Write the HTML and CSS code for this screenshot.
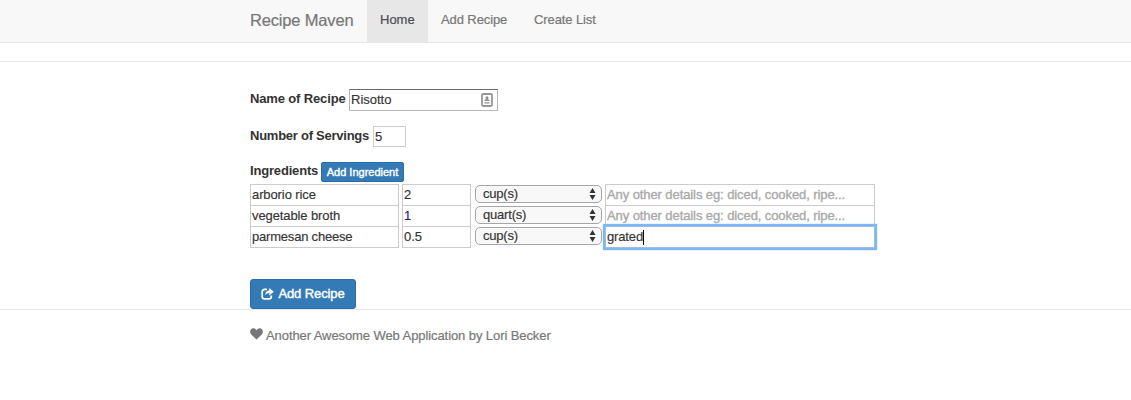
FILE: index.html
```html
<!DOCTYPE html>
<html lang="en">
<head>
<meta charset="utf-8">
<title>Recipe Maven</title>
<link rel="stylesheet" href="styles.css">
</head>
<body>
<nav class="navbar">
  <a class="brand">Recipe Maven</a>
  <a class="nav-link active">Home</a>
  <a class="nav-link nav-add">Add Recipe</a>
  <a class="nav-link">Create List</a>
</nav>
<div class="rule"></div>
<main class="form">
  <div class="field name-field">
    <label class="label name-label">Name of Recipe</label>
    <div class="input name-input"><span>Risotto</span>
      <svg class="card-icon" width="12" height="14" viewBox="0 0 12 14"><rect x="1" y="1" width="10" height="12" rx="1.2" fill="#fff" stroke="#979797" stroke-width="1.8"/><circle cx="6" cy="4.8" r="1.5" fill="#8e8e8e"/><path d="M3.5 8V7.2Q6 5 8.5 7.2V8ZM3.5 9.2h5v1.2h-5z" fill="#8e8e8e"/></svg>
    </div>
  </div>
  <div class="field servings-field">
    <label class="label servings-label">Number of Servings</label>
    <div class="input servings-input">5</div>
  </div>
  <div class="field ingredients-head">
    <label class="label ingredients-label">Ingredients</label>
    <button class="btn btn-small"><span>Add Ingredient</span></button>
  </div>
  <div class="ingredients">
    <div class="row">
      <div class="input cell-name">arborio rice</div>
      <div class="input cell-qty">2</div>
      <div class="select"><span>cup(s)</span><svg width="7" height="12" viewBox="0 0 7 12"><path d="M3.5 0L6.5 5h-6zM3.5 12L.5 7h6z" fill="#333"/></svg></div>
      <div class="input cell-details placeholder">Any other details eg: diced, cooked, ripe...</div>
    </div>
    <div class="row">
      <div class="input cell-name">vegetable broth</div>
      <div class="input cell-qty one">1</div>
      <div class="select"><span>quart(s)</span><svg width="7" height="12" viewBox="0 0 7 12"><path d="M3.5 0L6.5 5h-6zM3.5 12L.5 7h6z" fill="#333"/></svg></div>
      <div class="input cell-details placeholder">Any other details eg: diced, cooked, ripe...</div>
    </div>
    <div class="row">
      <div class="input cell-name cell-tight">parmesan cheese</div>
      <div class="input cell-qty">0.5</div>
      <div class="select"><span>cup(s)</span><svg width="7" height="12" viewBox="0 0 7 12"><path d="M3.5 0L6.5 5h-6zM3.5 12L.5 7h6z" fill="#333"/></svg></div>
      <div class="input cell-details focused"><span>grated</span><i class="caret"></i></div>
    </div>
  </div>
  <button class="btn btn-submit">
    <svg width="13" height="12" viewBox="0 0 13 12"><path d="M6 1.4H3.6Q1.2 1.4 1.2 3.8V8.4Q1.2 10.8 3.6 10.8H8Q10.3 10.8 10.3 8.4V7.6" fill="none" stroke="#fff" stroke-width="1.7"/><path d="M8.3 0L12.8 3.7L8.3 7.4V5.1Q5.6 5 4.2 7.3Q4.4 2.6 8.3 2.3Z" fill="#fff"/></svg>
    <span>Add Recipe</span>
  </button>
</main>
<footer class="footer">
  <svg width="13" height="12" viewBox="0 0 13 12"><path d="M6.5 11.6L1.2 6.4C-.5 4.6 0 1.8 1.7.8C3.5-.2 5.6.4 6.5 2.4C7.4.4 9.5-.2 11.3.8C13 1.8 13.5 4.6 11.8 6.4Z" fill="#777"/></svg>
  <span>Another Awesome Web Application by Lori Becker</span>
</footer>
</body>
</html>
```

FILE: styles.css
```css
* { box-sizing: border-box; }
body {
  margin: 0;
  background: #fff;
  color: #333;
  font: 13px/18px "Liberation Sans", Arial, sans-serif;
}
.navbar {
  display: flex;
  height: 43px;
  padding-left: 250px;
  background: #f8f8f8;
  border-bottom: 1px solid #e7e7e7;
  color: #777;
  letter-spacing: -.1px;
  -webkit-text-stroke: .2px;
}
.brand { width: 117px; padding-top: 11px; font-size: 16.5px; letter-spacing: -.17px; white-space: nowrap; }
.nav-link { padding: 11px 13px 0; white-space: nowrap; }
.nav-link.active { width: 61px; height: 42px; background: #e7e7e7; color: #4c4c55; letter-spacing: 0; }
.nav-add { width: 93px; }
.rule { height: 19px; border-bottom: 1px solid #e7e7e7; }
.form {
  display: flex;
  flex-direction: column;
  align-items: flex-start;
  height: 247px;
  padding: 27px 0 0 250px;
}
.field { display: flex; align-items: flex-start; }
.label { font-weight: bold; letter-spacing: -.14px; white-space: nowrap; }
.name-field { height: 37px; }
.name-label { width: 99px; padding-top: 1px; }
.servings-field { height: 36px; }
.servings-label { width: 123px; padding-top: 1px; letter-spacing: -.25px; }
.ingredients-head { height: 22px; }
.ingredients-label { width: 71px; letter-spacing: -.18px; }
.input {
  display: flex;
  align-items: center;
  height: 22px;
  padding: 0 1px;
  border: 1px solid #ccc;
  background: #fff;
  white-space: nowrap;
  -webkit-text-stroke: .15px;
}
.name-input {
  width: 149px;
  justify-content: space-between;
  padding-right: 4px;
  border-color: #6b6b6b #b5b5b5 #bbb;
}
.servings-input { width: 33px; height: 21px; }
.btn {
  display: flex;
  align-items: center;
  justify-content: center;
  border: 1px solid #2e6da4;
  background: #337ab7;
  color: #fff;
  font: 13px/18px "Liberation Sans", Arial, sans-serif;
  white-space: nowrap;
  -webkit-text-stroke: .4px #fff;
}
.btn-small { width: 83px; height: 20px; padding: 0; border-radius: 2px; font-size: 11px; }
.row { display: flex; height: 21px; }
.cell-name { width: 149px; margin-right: 3px; letter-spacing: -.1px; }
.cell-tight { letter-spacing: -.2px; }
.cell-qty { width: 69px; margin-right: 4px; }
.one { color: #1a1a80; }
.select {
  display: flex;
  align-items: center;
  justify-content: space-between;
  width: 127px;
  height: 18px;
  margin: 1px 3px 0 0;
  padding: 0 5px 0 7px;
  border: 1px solid #a6a6a6;
  border-radius: 5px;
  background: #f8f8f8;
  letter-spacing: -.2px;
  -webkit-text-stroke: .15px;
}
.cell-details { width: 270px; }
.placeholder { color: #a9a9a9; letter-spacing: -.09px; -webkit-text-stroke: .35px; }
.focused { border-color: #9dbfe5; box-shadow: 0 0 1px 2px #7db5f5; position: relative; letter-spacing: -.15px; }
.caret { width: 1px; height: 15px; background: #000; }
.btn-submit {
  gap: 4px;
  width: 106px;
  height: 30px;
  margin-top: 32px;
  padding: 0;
  border-radius: 3px;
  letter-spacing: -.1px;
}
.footer {
  display: flex;
  align-items: flex-start;
  gap: 3px;
  padding: 17px 0 0 250px;
  border-top: 1px solid #e7e7e7;
  color: #777;
  letter-spacing: -.085px;
  -webkit-text-stroke: .2px;
}
.footer svg { margin-top: 1px; }
```
